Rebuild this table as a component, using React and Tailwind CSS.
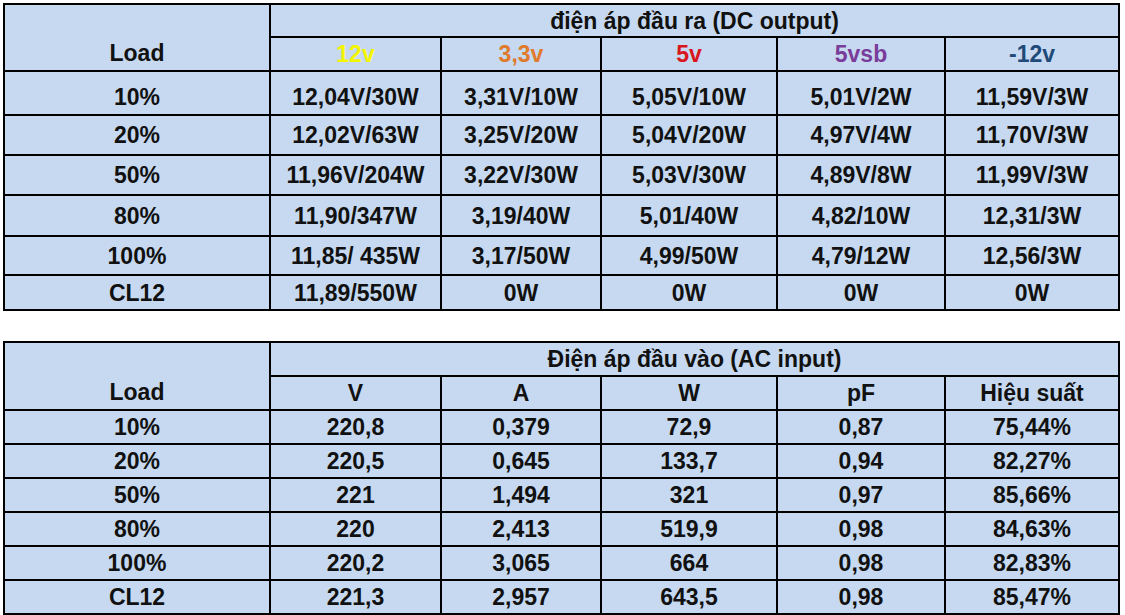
import React from "react";

const font = { fontFamily: '"Liberation Sans", Arial, sans-serif' };

const dcRows = [
  ["10%", "12,04V/30W", "3,31V/10W", "5,05V/10W", "5,01V/2W", "11,59V/3W", "h-[44px]", "pt-[8px]"],
  ["20%", "12,02V/63W", "3,25V/20W", "5,04V/20W", "4,97V/4W", "11,70V/3W", "h-[40px]", ""],
  ["50%", "11,96V/204W", "3,22V/30W", "5,03V/30W", "4,89V/8W", "11,99V/3W", "h-[40px]", ""],
  ["80%", "11,90/347W", "3,19/40W", "5,01/40W", "4,82/10W", "12,31/3W", "h-[41px]", ""],
  ["100%", "11,85/ 435W", "3,17/50W", "4,99/50W", "4,79/12W", "12,56/3W", "h-[39px]", ""],
  ["CL12", "11,89/550W", "0W", "0W", "0W", "0W", "h-[35px]", ""],
];

const acRows = [
  ["10%", "220,8", "0,379", "72,9", "0,87", "75,44%"],
  ["20%", "220,5", "0,645", "133,7", "0,94", "82,27%"],
  ["50%", "221", "1,494", "321", "0,97", "85,66%"],
  ["80%", "220", "2,413", "519,9", "0,98", "84,63%"],
  ["100%", "220,2", "3,065", "664", "0,98", "82,83%"],
  ["CL12", "221,3", "2,957", "643,5", "0,98", "85,47%"],
];

const cell = "border-2 border-black text-center align-middle p-0 leading-[24px]";

function Cols() {
  return (
    <colgroup>
      <col className="w-[266px]" />
      <col className="w-[171px]" />
      <col className="w-[160px]" />
      <col className="w-[176px]" />
      <col className="w-[168px]" />
      <col className="w-[174px]" />
    </colgroup>
  );
}

export default function App() {
  return (
    <div className="w-[1125px] h-[615px] bg-white pl-[3px] pt-[3px] overflow-hidden" style={font}>
      <table className="table-fixed border-collapse w-[1115px] bg-[#c6d9f0] text-[23px] font-bold text-[#111]">
        <Cols />
        <tbody>
          <tr className="h-[33px]">
            <td rowSpan={2} className={`${cell} !align-bottom pb-[5px]`}>Load</td>
            <td colSpan={5} className={cell}>điện áp đầu ra (DC output)</td>
          </tr>
          <tr className="h-[34px]">
            <td className={`${cell} text-[#f5f500]`}>12v</td>
            <td className={`${cell} text-[#e07a2c]`}>3,3v</td>
            <td className={`${cell} text-[#d9161b]`}>5v</td>
            <td className={`${cell} text-[#7a3c9a]`}>5vsb</td>
            <td className={`${cell} text-[#1f4a78]`}>-12v</td>
          </tr>
          {dcRows.map((r) => (
            <tr key={r[0]} className={r[6]}>
              {r.slice(0, 6).map((v, i) => (
                <td key={i} className={`${cell} ${r[7]}`}>{v}</td>
              ))}
            </tr>
          ))}
        </tbody>
      </table>

      <div className="h-[30px]" />

      <table className="table-fixed border-collapse w-[1117px] bg-[#c6d9f0] text-[23px] font-bold text-[#111]">
        <Cols />
        <tbody>
          <tr className="h-[34px]">
            <td rowSpan={2} className={`${cell} !align-bottom pb-[5px]`}>Load</td>
            <td colSpan={5} className={cell}>Điện áp đầu vào (AC input)</td>
          </tr>
          <tr className="h-[34px]">
            <td className={cell}>V</td>
            <td className={cell}>A</td>
            <td className={cell}>W</td>
            <td className={cell}>pF</td>
            <td className={cell}>Hiệu suất</td>
          </tr>
          {acRows.map((r) => (
            <tr key={r[0]} className="h-[34px]">
              {r.map((v, i) => (
                <td key={i} className={cell}>{v}</td>
              ))}
            </tr>
          ))}
        </tbody>
      </table>
    </div>
  );
}
